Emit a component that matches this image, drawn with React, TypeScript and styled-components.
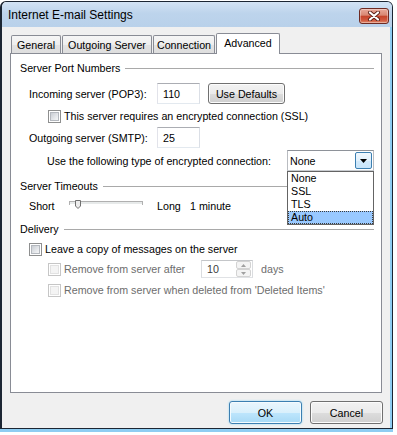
import styled, { createGlobalStyle } from "styled-components"

const GlobalStyle = createGlobalStyle`
  html, body {
    margin: 0;
    padding: 0;
    background: #ffffff;
  }
  body {
    font-family: "Liberation Sans", Arial, sans-serif;
    font-size: 10.7px;
    color: #000;
  }
`

const Desktop = styled.div`
  width: 397px;
  height: 435px;
  overflow: hidden;
  background: #ffffff;
  display: flex;
  flex-direction: column;
`

const Window = styled.div`
  box-sizing: border-box;
  margin-top: 1px;
  width: 393px;
  height: 428px;
  flex-shrink: 0;
  display: flex;
  flex-direction: column;
  background: #f0f0f0;
  border: 1px solid #1c2633;
  border-left-width: 2px;
  border-radius: 6px 6px 0 0;
  box-shadow: inset -2px 0 0 #8ecdf2;
`

const BottomGlow = styled.div`
  height: 3px;
  width: 393px;
  background: #8ecdf2;
`

const TitleBar = styled.div`
  height: 25px;
  flex-shrink: 0;
  display: flex;
  align-items: center;
  padding: 0 3px 0 6px;
  background: linear-gradient(#d3e3f4, #bdd4ec 45%, #b9d1ea);
  border-radius: 5px 5px 0 0;
`

const Title = styled.div`
  flex: 1;
  font-size: 12px;
  color: #000;
`

const CloseButton = styled.div`
  align-self: flex-start;
  margin-top: 6px;
  box-sizing: border-box;
  width: 30px;
  height: 16px;
  border: 1px solid #6e2a22;
  border-radius: 3px;
  background: linear-gradient(#e9a99a, #d88672 45%, #c5432a 50%, #d0583e 80%, #e08a6c);
  box-shadow: inset 0 0 0 1px rgba(255, 255, 255, 0.35);
  display: flex;
  align-items: center;
  justify-content: center;
`

const Client = styled.div`
  flex: 1;
  display: flex;
  flex-direction: column;
  padding: 6px 0 0 8px;
`

const TabsRow = styled.div`
  height: 20px;
  display: flex;
  align-items: flex-end;
  padding-left: 1px;
`

const Tab = styled.div<{ $w: number; $active?: boolean }>`
  box-sizing: border-box;
  position: relative;
  z-index: ${p => (p.$active ? 1 : 0)};
  width: ${p => p.$w}px;
  height: ${p => (p.$active ? 21 : 18)}px;
  margin-right: 1px;
  margin-bottom: ${p => (p.$active ? -1 : 0)}px;
  padding-bottom: ${p => (p.$active ? 2 : 0)}px;
  display: flex;
  align-items: center;
  justify-content: center;
  border: 1px solid #898c95;
  border-bottom: none;
  border-radius: 2px 2px 0 0;
  background: ${p =>
    p.$active ? "#ffffff" : "linear-gradient(#f6f6f6, #eeeeee 50%, #e3e3e3 51%, #dedede)"};
  white-space: nowrap;
`

const Panel = styled.div`
  box-sizing: border-box;
  width: 372px;
  height: 340px;
  border: 1px solid #898c95;
  background: #ffffff;
  padding: 0 7px 0 9px;
  display: flex;
  flex-direction: column;
`

const GroupHeader = styled.div<{ $mt: number }>`
  display: flex;
  align-items: center;
  gap: 5px;
  height: 14px;
  margin-top: ${p => p.$mt}px;
  white-space: nowrap;

  &::after {
    content: "";
    flex: 1;
    height: 1px;
    background: #a9a9a9;
  }
`

const Row = styled.div<{ $indent: number; $h?: number; $mt: number }>`
  display: flex;
  align-items: center;
  height: ${p => p.$h ?? 14}px;
  margin-top: ${p => p.$mt}px;
  padding-left: ${p => p.$indent}px;
  white-space: nowrap;
`

const Label = styled.span<{ $w?: number; $disabled?: boolean }>`
  display: inline-block;
  width: ${p => (p.$w ? `${p.$w}px` : "auto")};
  flex-shrink: 0;
  color: ${p => (p.$disabled ? "#6d6d6d" : "#000")};
`

const TextBox = styled.div<{ $w: number; $h: number; $disabled?: boolean }>`
  box-sizing: border-box;
  width: ${p => p.$w}px;
  height: ${p => p.$h}px;
  flex-shrink: 0;
  display: flex;
  align-items: center;
  padding-left: 5px;
  background: #ffffff;
  border: 1px solid;
  border-color: ${p =>
    p.$disabled ? "#c4c6c9 #dadcdf #e0e2e5 #dadcdf" : "#abadb3 #dbdfe6 #e3e9ef #e2e3ea"};
  position: relative;
`

const Button = styled.div<{ $w: number; $h: number; $primary?: boolean }>`
  box-sizing: border-box;
  width: ${p => p.$w}px;
  height: ${p => p.$h}px;
  flex-shrink: 0;
  display: flex;
  align-items: center;
  justify-content: center;
  border: 1px solid ${p => (p.$primary ? "#3c7fb1" : "#707070")};
  border-radius: 3px;
  background: ${p =>
    p.$primary
      ? "linear-gradient(#eaf6fd, #d9f0fc 50%, #bee6fd 51%, #a7d9f5)"
      : "linear-gradient(#f2f2f2, #ebebeb 50%, #dddddd 51%, #cfcfcf)"};
  box-shadow: ${p =>
    p.$primary
      ? "inset 0 0 0 1px #f4fbfe, 0 0 2px 0 #7fd0f5"
      : "inset 0 0 0 1px #fcfcfc"};
`

const CheckBox = styled.span<{ $disabled?: boolean }>`
  box-sizing: border-box;
  width: 13px;
  height: 13px;
  flex-shrink: 0;
  margin-right: 3px;
  padding: 1px;
  background: #ffffff;
  border: 1px solid ${p => (p.$disabled ? "#c6c6c6" : "#8e8f8f")};

  &::after {
    content: "";
    display: block;
    box-sizing: border-box;
    width: 9px;
    height: 9px;
    border: 1px solid ${p => (p.$disabled ? "#e2e2e2" : "#b4b8be")};
    background: ${p =>
      p.$disabled ? "#f4f4f4" : "linear-gradient(135deg, #c9cdd3, #e9ebee 70%, #f4f5f6)"};
  }
`

const ComboWrap = styled.div`
  position: relative;
  flex-shrink: 0;
`

const ComboBox = styled.div`
  box-sizing: border-box;
  width: 87px;
  height: 21px;
  display: flex;
  align-items: center;
  justify-content: space-between;
  padding: 1px 1px 1px 2px;
  background: #ffffff;
  border: 1px solid;
  border-color: #8e9299 #b9bcc1 #c9ccd0 #b9bcc1;
`

const ComboArrow = styled.div`
  box-sizing: border-box;
  width: 17px;
  height: 17px;
  display: flex;
  align-items: center;
  justify-content: center;
  border: 1px solid #3c7fb1;
  border-radius: 2px;
  background: linear-gradient(#f1f8fe, #e2f1fc 50%, #d3eafb 51%, #c8e5fa);
`

const ListBox = styled.div`
  position: absolute;
  z-index: 5;
  left: 0;
  top: 100%;
  box-sizing: border-box;
  width: 87px;
  background: #ffffff;
  border: 1px solid #646464;
`

const ListItem = styled.div<{ $selected?: boolean }>`
  box-sizing: border-box;
  height: 13px;
  line-height: 11px;
  padding-left: 2px;
  background: ${p => (p.$selected ? "#99c9ff" : "transparent")};
  border: 1px ${p => (p.$selected ? "dotted #3a3a3a" : "solid transparent")};
`

const SpinButtons = styled.div`
  position: absolute;
  right: 1px;
  top: 0;
  bottom: 0;
  width: 15px;
  display: flex;
  flex-direction: column;
`

const SpinHalf = styled.div`
  flex: 1;
  box-sizing: border-box;
  display: flex;
  align-items: center;
  justify-content: center;
  border: 1px solid #d3d3d3;
  border-radius: 2px;
  background: #f4f4f4;
`

const ButtonRow = styled.div`
  width: 373px;
  margin-top: 8px;
  display: flex;
  justify-content: flex-end;
  gap: 8px;
`

const tabs = [
  { label: "General", w: 50 },
  { label: "Outgoing Server", w: 90 },
  { label: "Connection", w: 62 },
  { label: "Advanced", w: 64, active: true },
]

const encryptionOptions = ["None", "SSL", "TLS", "Auto"]

const CloseGlyph = () => (
  <svg width="14" height="10" viewBox="0 0 14 10">
    <path d="M3 1.5 L11 8.5 M11 1.5 L3 8.5" stroke="#5a2018" strokeWidth="4" strokeLinecap="round" />
    <path d="M3 1.5 L11 8.5 M11 1.5 L3 8.5" stroke="#ffffff" strokeWidth="2.2" strokeLinecap="round" />
  </svg>
)

const Slider = () => (
  <svg width="74" height="14" viewBox="0 0 74 14" style={{ flexShrink: 0 }}>
    <rect x="0.5" y="2.5" width="73" height="3" fill="#e7eaea" stroke="#b0b0b0" />
    <line x1="1" y1="5.5" x2="73" y2="5.5" stroke="#ffffff" />
    <path d="M6.5 1.5 H11.5 V7 L9 9.5 L6.5 7 Z" fill="#ececec" stroke="#707070" />
  </svg>
)

const App = () => {
  return (
    <>
      <GlobalStyle />
      <Desktop>
        <Window>
          <TitleBar>
            <Title>Internet E-mail Settings</Title>
            <CloseButton>
              <CloseGlyph />
            </CloseButton>
          </TitleBar>
          <Client>
            <TabsRow>
              {tabs.map(t => (
                <Tab key={t.label} $w={t.w} $active={t.active}>
                  {t.label}
                </Tab>
              ))}
            </TabsRow>
            <Panel>
              <GroupHeader $mt={7}>Server Port Numbers</GroupHeader>
              <Row $indent={9} $h={21} $mt={8}>
                <Label $w={128}>Incoming server (POP3):</Label>
                <TextBox $w={43} $h={21}>110</TextBox>
                <Button $w={77} $h={21} style={{ marginLeft: 8 }}>
                  Use Defaults
                </Button>
              </Row>
              <Row $indent={28} $mt={5}>
                <CheckBox />
                <Label>This server requires an encrypted connection (SSL)</Label>
              </Row>
              <Row $indent={9} $h={21} $mt={4}>
                <Label $w={128}>Outgoing server (SMTP):</Label>
                <TextBox $w={43} $h={21}>25</TextBox>
              </Row>
              <Row $indent={27} $h={21} $mt={2}>
                <Label $w={240}>Use the following type of encrypted connection:</Label>
                <ComboWrap>
                  <ComboBox>
                    <span>None</span>
                    <ComboArrow>
                      <svg width="7" height="4" viewBox="0 0 7 4">
                        <path d="M0 0 H7 L3.5 4 Z" fill="#000" />
                      </svg>
                    </ComboArrow>
                  </ComboBox>
                  <ListBox>
                    {encryptionOptions.map(o => (
                      <ListItem key={o} $selected={o === "Auto"}>
                        {o}
                      </ListItem>
                    ))}
                  </ListBox>
                </ComboWrap>
              </Row>
              <GroupHeader $mt={8}>Server Timeouts</GroupHeader>
              <Row $indent={9} $mt={6}>
                <Label $w={40}>Short</Label>
                <Slider />
                <Label $w={33} style={{ marginLeft: 14 }}>
                  Long
                </Label>
                <Label>1 minute</Label>
              </Row>
              <GroupHeader $mt={9}>Delivery</GroupHeader>
              <Row $indent={9} $mt={6}>
                <CheckBox />
                <Label>Leave a copy of messages on the server</Label>
              </Row>
              <Row $indent={28} $h={18} $mt={4}>
                <CheckBox $disabled />
                <Label $w={137} $disabled>
                  Remove from server after
                </Label>
                <TextBox $w={52} $h={18} $disabled>
                  <span style={{ color: "#3c3c3c" }}>10</span>
                  <SpinButtons>
                    <SpinHalf>
                      <svg width="5" height="3" viewBox="0 0 5 3">
                        <path d="M0 3 L2.5 0 L5 3 Z" fill="#a0a0a0" />
                      </svg>
                    </SpinHalf>
                    <SpinHalf>
                      <svg width="5" height="3" viewBox="0 0 5 3">
                        <path d="M0 0 H5 L2.5 3 Z" fill="#a0a0a0" />
                      </svg>
                    </SpinHalf>
                  </SpinButtons>
                </TextBox>
                <Label $disabled style={{ marginLeft: 8 }}>
                  days
                </Label>
              </Row>
              <Row $indent={28} $mt={5}>
                <CheckBox $disabled />
                <Label $disabled>Remove from server when deleted from 'Deleted Items'</Label>
              </Row>
            </Panel>
            <ButtonRow>
              <Button $w={73} $h={23} $primary>
                OK
              </Button>
              <Button $w={73} $h={23}>
                Cancel
              </Button>
            </ButtonRow>
          </Client>
        </Window>
        <BottomGlow />
      </Desktop>
    </>
  )
}

export default App
